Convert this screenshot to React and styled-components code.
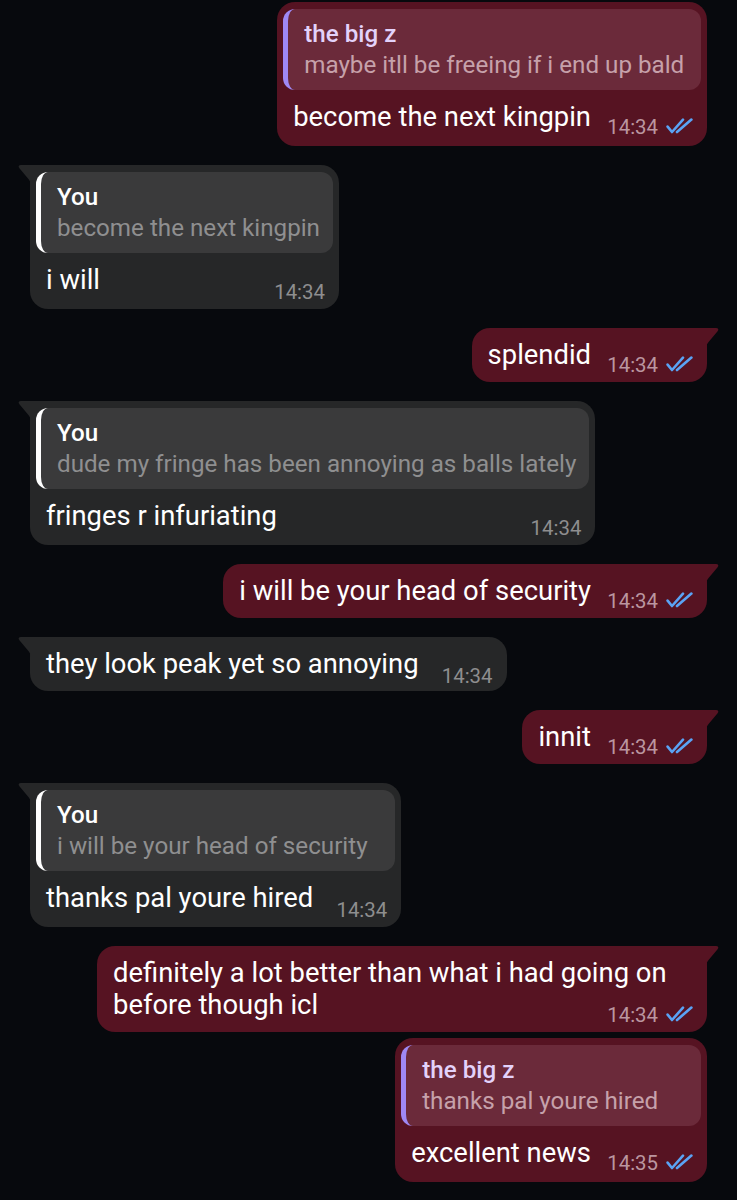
import React from "react";
import styled, { createGlobalStyle } from "styled-components";

const GlobalStyle = createGlobalStyle`
  html, body {
    margin: 0;
    padding: 0;
    background: #07090d;
  }
  body {
    font-family: Roboto, "Noto Sans", "Liberation Sans", sans-serif;
    -webkit-font-smoothing: antialiased;
  }
`;

const Chat = styled.div`
  display: flex;
  flex-direction: column;
  padding: 2px 30px 0 30px;
  width: 737px;
  box-sizing: border-box;
`;

const Bubble = styled.div`
  position: relative;
  display: flex;
  flex-direction: column;
  box-sizing: border-box;
  max-width: 610px;
  align-self: ${(p) => (p.$out ? "flex-end" : "flex-start")};
  margin-top: ${(p) => (p.$first ? 0 : p.$grouped ? 6 : 19)}px;
  background: ${(p) => (p.$out ? "#561322" : "#262728")};
  color: ${(p) => (p.$out ? "#561322" : "#262728")};
  border-radius: 18px;
  border-top-right-radius: ${(p) => (p.$out && p.$tail ? 0 : 18)}px;
  border-top-left-radius: ${(p) => (!p.$out && p.$tail ? 0 : 18)}px;
  padding: ${(p) => (p.$reply ? "7px 6px 0 6px" : "0")};
`;

const Tail = styled.svg`
  position: absolute;
  top: 0;
  width: 13px;
  height: 20px;
  ${(p) => (p.$out ? "right: -12px;" : "left: -12px; transform: scaleX(-1);")}
  fill: currentColor;
`;

const ReplyBox = styled.div`
  display: flex;
  flex-direction: column;
  box-sizing: border-box;
  border-radius: 12px;
  border-left: 5px solid ${(p) => (p.$out ? "#9f88f4" : "#ffffff")};
  background: ${(p) => (p.$out ? "#6b2a3a" : "#3a3a3b")};
  padding: 10px ${(p) => (p.$out ? 15 : 13)}px 9px 16px;
`;

const ReplyName = styled.div`
  font-size: 24.2px;
  line-height: 31px;
  font-weight: 500;
  color: ${(p) => (p.$out ? "#e3d2fa" : "#ffffff")};
  white-space: nowrap;
`;

const ReplyText = styled.div`
  font-size: 24.2px;
  line-height: 31px;
  font-weight: 400;
  color: ${(p) => (p.$out ? "#c6a1aa" : "#8f8f90")};
  white-space: nowrap;
`;

const Body = styled.div`
  display: flex;
  flex-direction: column;
  padding-top: 11px;
  padding-left: ${(p) => (p.$reply ? 10 : 16)}px;
  padding-right: ${(p) => (p.$reply ? 8 : 14)}px;
  padding-bottom: ${(p) => (p.$reply ? 9 : 7) - (p.$out ? 0 : 2)}px;
`;

const BodyText = styled.div`
  font-size: 27.4px;
  line-height: 32px;
  color: #ffffff;
`;

const MetaSpacer = styled.span`
  display: inline-block;
  width: ${(p) => (p.$out ? 102 : 74)}px;
  height: 1px;
`;

const Meta = styled.div`
  align-self: flex-end;
  display: flex;
  align-items: center;
  gap: 8px;
  height: 20px;
  margin-top: ${(p) => (p.$out ? -16 : -14)}px;
`;

const Time = styled.span`
  font-size: 20.4px;
  line-height: 20px;
  color: ${(p) => (p.$out ? "#bb96a0" : "#8e8e8f")};
`;

const Checks = styled.svg`
  width: 27px;
  height: 16px;
  margin-top: -2px;
  fill: none;
  stroke: #5aa3f5;
  stroke-width: 2.6;
  stroke-linecap: round;
  stroke-linejoin: round;
`;

const messages = [
  {
    out: true,
    tail: false,
    reply: { name: "the big z", text: "maybe itll be freeing if i end up bald" },
    text: "become the next kingpin",
    time: "14:34",
  },
  {
    out: false,
    tail: true,
    reply: { name: "You", text: "become the next kingpin" },
    text: "i will",
    time: "14:34",
  },
  { out: true, tail: true, text: "splendid", time: "14:34" },
  {
    out: false,
    tail: true,
    reply: {
      name: "You",
      text: "dude my fringe has been annoying as balls lately",
    },
    text: "fringes r infuriating",
    time: "14:34",
  },
  {
    out: true,
    tail: true,
    text: "i will be your head of security",
    time: "14:34",
  },
  {
    out: false,
    tail: true,
    text: "they look peak yet so annoying",
    time: "14:34",
  },
  { out: true, tail: true, text: "innit", time: "14:34" },
  {
    out: false,
    tail: true,
    reply: { name: "You", text: "i will be your head of security" },
    text: "thanks pal youre hired",
    time: "14:34",
  },
  {
    out: true,
    tail: true,
    text: "definitely a lot better than what i had going on before though icl",
    time: "14:34",
  },
  {
    out: true,
    tail: false,
    grouped: true,
    reply: { name: "the big z", text: "thanks pal youre hired" },
    text: "excellent news",
    time: "14:35",
  },
];

function TailShape({ out }) {
  return (
    <Tail $out={out} viewBox="0 0 13 20" aria-hidden="true">
      <path d="M0 0 H10 C12.4 0 13 1.6 11.6 3.3 L3 13.5 C1.2 15.6 0.4 17.5 0 20 Z" />
    </Tail>
  );
}

function ReadChecks() {
  return (
    <Checks viewBox="0 0 27 16" aria-hidden="true">
      <path d="M1.6 8.6 L6 14 L17 1.6" />
      <path d="M11 14 L25.4 1.6" />
    </Checks>
  );
}

function Message({ m, first }) {
  return (
    <Bubble
      $out={m.out}
      $tail={m.tail}
      $reply={!!m.reply}
      $grouped={m.grouped}
      $first={first}
    >
      {m.tail && <TailShape out={m.out} />}
      {m.reply && (
        <ReplyBox $out={m.out}>
          <ReplyName $out={m.out}>{m.reply.name}</ReplyName>
          <ReplyText $out={m.out}>{m.reply.text}</ReplyText>
        </ReplyBox>
      )}
      <Body $reply={!!m.reply} $out={m.out}>
        <BodyText>
          {m.text}
          <MetaSpacer $out={m.out} />
        </BodyText>
        <Meta $out={m.out}>
          <Time $out={m.out}>{m.time}</Time>
          {m.out && <ReadChecks />}
        </Meta>
      </Body>
    </Bubble>
  );
}

export default function App() {
  return (
    <>
      <GlobalStyle />
      <Chat>
        {messages.map((m, i) => (
          <Message key={i} m={m} first={i === 0} />
        ))}
      </Chat>
    </>
  );
}
